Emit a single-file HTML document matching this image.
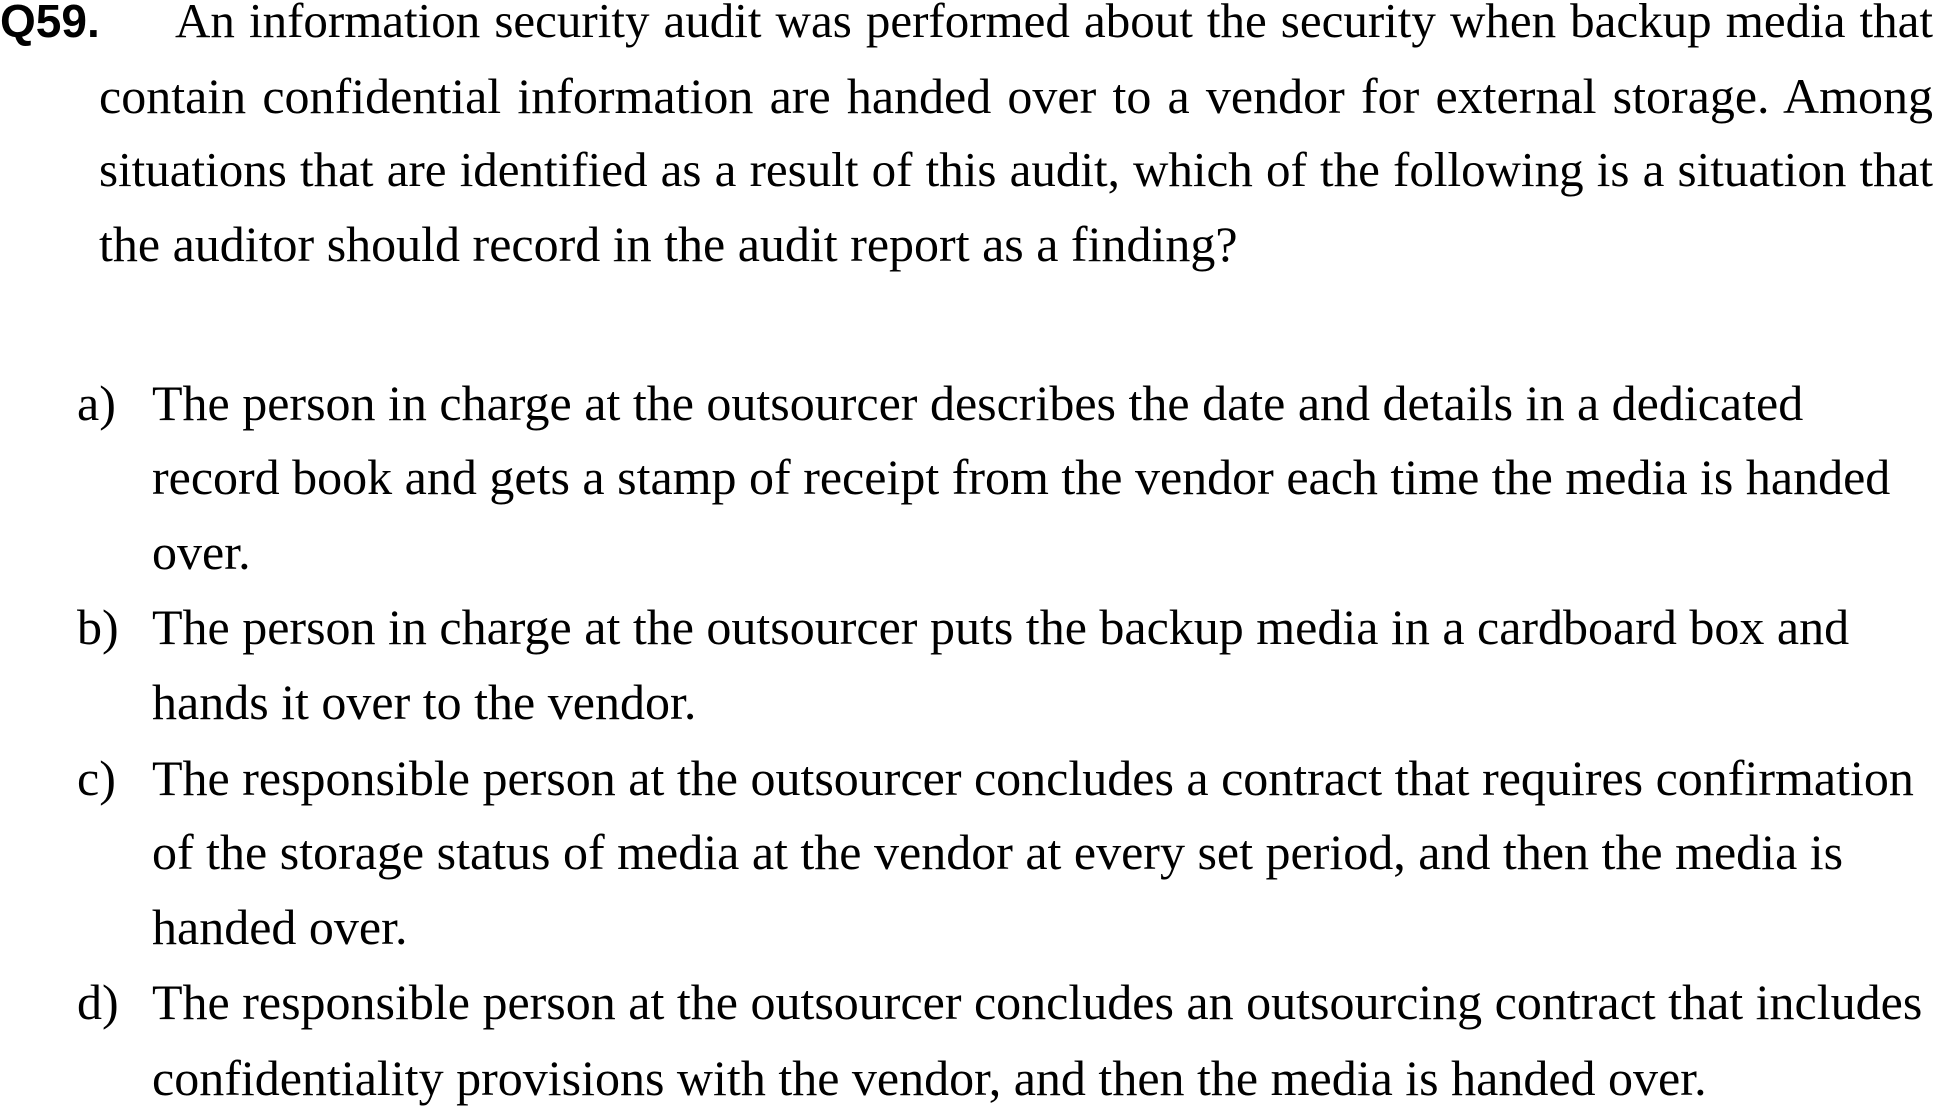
<!DOCTYPE html>
<html><head><meta charset="utf-8"><style>
html,body{margin:0;padding:0;background:#fff;}
body{width:1935px;height:1105px;position:relative;overflow:hidden;}
.l{position:absolute;font-family:"Liberation Serif","Times New Roman",serif;font-size:50px;line-height:74px;height:74px;color:#000;white-space:nowrap;}
.j{text-align:justify;text-align-last:justify;white-space:normal;}
.s{font-size:49px;}
.q{position:absolute;left:0;top:-16px;font-family:"Liberation Sans",sans-serif;font-weight:bold;font-size:46px;line-height:74px;color:#000;}
</style></head><body>
<div class="q">Q59.</div>
<div class="l j s" style="left:175px;width:1758px;top:-16px">An information security audit was performed about the security when backup media that</div>
<div class="l j" style="left:99px;width:1834px;top:59px">contain confidential information are handed over to a vendor for external storage. Among</div>
<div class="l j s" style="left:99px;width:1834px;top:133px">situations that are identified as a result of this audit, which of the following is a situation that</div>
<div class="l" style="left:99px;top:207px">the auditor should record in the audit report as a finding?</div>

<div class="l" style="left:77px;top:366px">a)</div>
<div class="l" style="left:152px;top:366px">The person in charge at the outsourcer describes the date and details in a dedicated</div>
<div class="l" style="left:152px;top:440px">record book and gets a stamp of receipt from the vendor each time the media is handed</div>
<div class="l" style="left:152px;top:515px">over.</div>
<div class="l" style="left:77px;top:590px">b)</div>
<div class="l" style="left:152px;top:590px">The person in charge at the outsourcer puts the backup media in a cardboard box and</div>
<div class="l" style="left:152px;top:665px">hands it over to the vendor.</div>
<div class="l" style="left:77px;top:741px">c)</div>
<div class="l" style="left:152px;top:741px">The responsible person at the outsourcer concludes a contract that requires confirmation</div>
<div class="l" style="left:152px;top:815px">of the storage status of media at the vendor at every set period, and then the media is</div>
<div class="l" style="left:152px;top:890px">handed over.</div>
<div class="l" style="left:77px;top:965px">d)</div>
<div class="l" style="left:152px;top:965px">The responsible person at the outsourcer concludes an outsourcing contract that includes</div>
<div class="l" style="left:152px;top:1041px">confidentiality provisions with the vendor, and then the media is handed over.</div>
</body></html>
